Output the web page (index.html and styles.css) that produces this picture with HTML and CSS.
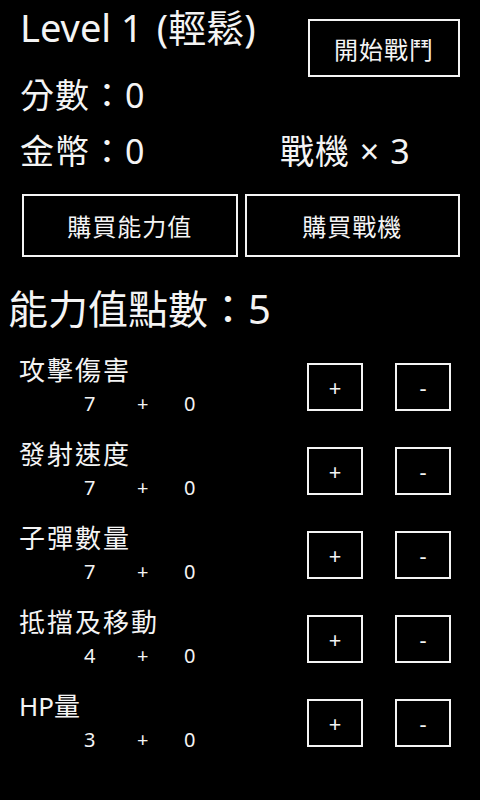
FILE: index.html
```html
<!DOCTYPE html>
<html lang="zh-Hant">
<head>
<meta charset="utf-8">
<title>Level 1</title>
<link rel="stylesheet" href="styles.css">
</head>
<body>
<div class="screen">
  <header class="header">
    <div class="title">Level 1<span class="mode">(輕鬆)</span></div>
    <button class="btn start">開始戰鬥</button>
    <div class="stat">分數：0</div>
  </header>
  <div class="coins-row">
    <div class="stat">金幣：0</div>
    <div class="stat ships">戰機 × 3</div>
  </div>
  <div class="buy-row">
    <button class="btn buy">購買能力值</button>
    <button class="btn buy">購買戰機</button>
  </div>
  <div class="points">能力值點數：5</div>
  <div class="abilities">
    <div class="ability">
      <div class="info">
        <div class="label">攻擊傷害</div>
        <div class="values"><span>7</span><span>+</span><span>0</span></div>
      </div>
      <div class="controls"><button class="btn small">+</button><button class="btn small">-</button></div>
    </div>
    <div class="ability">
      <div class="info">
        <div class="label">發射速度</div>
        <div class="values"><span>7</span><span>+</span><span>0</span></div>
      </div>
      <div class="controls"><button class="btn small">+</button><button class="btn small">-</button></div>
    </div>
    <div class="ability">
      <div class="info">
        <div class="label">子彈數量</div>
        <div class="values"><span>7</span><span>+</span><span>0</span></div>
      </div>
      <div class="controls"><button class="btn small">+</button><button class="btn small">-</button></div>
    </div>
    <div class="ability">
      <div class="info">
        <div class="label">抵擋及移動</div>
        <div class="values"><span>4</span><span>+</span><span>0</span></div>
      </div>
      <div class="controls"><button class="btn small">+</button><button class="btn small">-</button></div>
    </div>
    <div class="ability">
      <div class="info">
        <div class="label"><span class="latin">HP</span>量</div>
        <div class="values"><span>3</span><span>+</span><span>0</span></div>
      </div>
      <div class="controls"><button class="btn small">+</button><button class="btn small">-</button></div>
    </div>
  </div>
</div>
</body>
</html>
```
FILE: styles.css
```css
html, body {
  margin: 0;
  padding: 0;
  background: #000;
}
body {
  width: 480px;
  height: 800px;
  overflow: hidden;
  color: #f4f4f4;
  font-family: "Noto Sans", "Noto Sans CJK TC", sans-serif;
}
.screen {
  display: flex;
  flex-direction: column;
}
.header {
  display: grid;
  grid-template-columns: 1fr 152px;
  padding: 2px 20px 0 20px;
}
.title {
  grid-column: 1;
  grid-row: 1;
  font-size: 38px;
  line-height: 50px;
  margin-bottom: 15px;
  white-space: nowrap;
}
.mode {
  margin-left: 14px;
}
.btn {
  font-family: "Noto Sans", "Noto Sans CJK TC", sans-serif;
  background: #000;
  color: #f4f4f4;
  border: 2px solid #f4f4f4;
  padding: 0;
  margin: 0;
  box-sizing: border-box;
  display: flex;
  align-items: center;
  justify-content: center;
}
.start {
  grid-column: 2;
  grid-row: 1 / span 2;
  align-self: start;
  margin-top: 17px;
  height: 58px;
  font-size: 24px;
  letter-spacing: 1px;
}
.stat {
  font-size: 34px;
  line-height: 56px;
  letter-spacing: 1px;
  white-space: nowrap;
}
.header .stat {
  grid-column: 1;
  grid-row: 2;
}
.coins-row {
  display: grid;
  grid-template-columns: 260px auto;
  padding: 0 20px;
}
.buy-row {
  display: flex;
  gap: 7px;
  padding: 0 20px 0 22px;
  margin-top: 15px;
}
.buy {
  flex: 1;
  height: 63px;
  font-size: 24px;
  letter-spacing: 1px;
}
.points {
  font-size: 40px;
  line-height: 56px;
  padding-left: 8px;
  margin-top: 24px;
  white-space: nowrap;
}
.abilities {
  display: flex;
  flex-direction: column;
  margin-top: 17px;
}
.ability {
  height: 84px;
  display: flex;
  justify-content: space-between;
  padding: 0 29px 0 19px;
}
.label {
  font-size: 26px;
  line-height: 32px;
  letter-spacing: 2px;
  white-space: nowrap;
}
.latin {
  letter-spacing: 0;
}
.values {
  display: grid;
  grid-template-columns: 53px 47px auto;
  padding-left: 65px;
  margin-top: 4px;
  font-size: 20px;
  line-height: 28px;
}
.controls {
  display: flex;
  gap: 32px;
  margin-top: 9px;
  align-items: flex-start;
}
.small {
  width: 56px;
  height: 48px;
  font-size: 22px;
  line-height: 1;
}
```
